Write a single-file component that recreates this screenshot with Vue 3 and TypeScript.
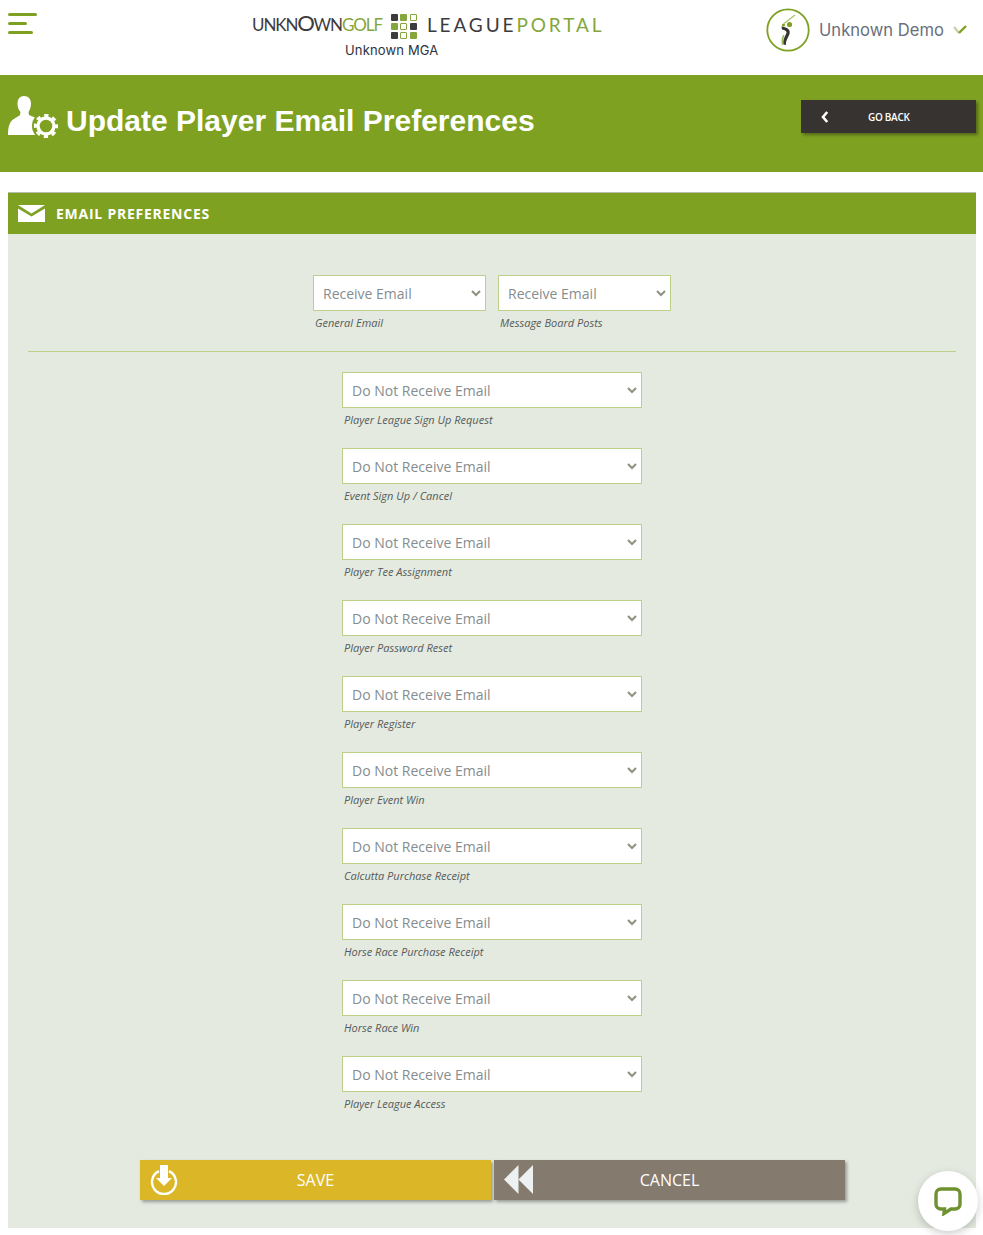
<template>
  <div class="page">
    <header class="top-bar">
      <button class="menu-btn" aria-label="Menu">
        <span class="bar bar-long"></span>
        <span class="bar bar-mid"></span>
        <span class="bar bar-short"></span>
      </button>
      <div class="brand">
        <div class="logo-row">
          <span class="logo-golf"><span class="dark">UNKN<span class="big-o">O</span>WN</span><span class="green">GOLF</span></span>
          <span class="logo-grid">
            <i v-for="(cell, i) in gridCells" :key="i" :class="cell"></i>
          </span>
          <span class="logo-portal"><span class="dark">LEAGUE</span><span class="green">PORTAL</span></span>
        </div>
        <div class="org-name">Unknown MGA</div>
      </div>
      <div class="user">
        <span class="avatar">
          <svg viewBox="0 0 44 44" width="44" height="44">
            <circle cx="22" cy="22" r="20.7" fill="#fff" stroke="#7fa122" stroke-width="1.8" />
            <path d="M18 15.5 L29 7" stroke="#a9c46a" stroke-width="1.4" fill="none" />
            <circle cx="23.5" cy="16.5" r="2.6" fill="#7fa122" />
            <circle cx="17.5" cy="17" r="1.6" fill="#7fa122" />
            <path d="M15.5 18.5 C20 19 25 21 23.5 26 C22 30 19.5 33 20 37 L17.5 36.5 C16.5 32 19 28.5 20.5 25 C21 23 18.5 22 16 21.5 Z" fill="#373330" />
            <path d="M17 27 C15.5 30 15 33 16 37 L17.5 37 C16.7 33 17.5 30 18.5 27 Z" fill="#9dbb5c" />
          </svg>
        </span>
        <span class="user-name">Unknown Demo</span>
        <svg class="user-check" viewBox="0 0 14 10" width="14" height="10">
          <path d="M1 2 L6 8" stroke="#c6d5a0" stroke-width="2.4" fill="none" />
          <path d="M6 8 L13 1" stroke="#7fa122" stroke-width="2.4" fill="none" />
        </svg>
      </div>
    </header>

    <section class="banner">
      <h1 class="banner-title">
        <svg class="banner-icon" viewBox="0 0 50 42" width="50" height="42">
          <path d="M16 0 C20.5 0 23 3 23 7.5 C23 11 22 14 20.5 16 L21 19 C25 20.5 28 22 30 24 L30 39 L0 39 C0 33 1 26 5 23.5 C7 22 10 20.5 12 19 L12.5 16 C10.5 14 9.5 11 9.5 7.5 C9.5 3 12 0 16 0 Z" fill="#fff" />
          <circle cx="38" cy="30" r="14" fill="#7fa122" />
          <circle cx="38" cy="30" r="8" fill="none" stroke="#fff" stroke-width="3.4" />
          <circle cx="38" cy="30" r="10.6" fill="none" stroke="#fff" stroke-width="3" stroke-dasharray="4.3 4.03" stroke-dashoffset="2.15" />
        </svg>
        <span>Update Player Email Preferences</span>
      </h1>
      <button class="back-btn">
        <svg viewBox="0 0 8 12" width="8" height="12">
          <path d="M6.2 1 L2 6 L6.2 11" stroke="#fff" stroke-width="2.6" fill="none" />
        </svg>
        <span>GO BACK</span>
      </button>
    </section>

    <section class="panel">
      <div class="panel-head">
        <svg viewBox="0 0 27 17" width="27" height="17">
          <path d="M0 0 H27 L13.5 8.5 Z" fill="#fff" />
          <path d="M0 3.5 L13.5 11.5 L27 3.5 V17 H0 Z" fill="#fff" />
        </svg>
        <span>EMAIL PREFERENCES</span>
      </div>
      <div class="panel-body">
        <div class="top-fields">
          <div v-for="f in topFields" :key="f" class="field field-small">
            <div class="select-wrap">
              <select>
                <option>Receive Email</option>
                <option>Do Not Receive Email</option>
              </select>
              <svg class="chevron" viewBox="0 0 10 7" width="10" height="7">
                <path d="M1 1 L5 5 L9 1" stroke="#8f9180" stroke-width="2" fill="none" />
              </svg>
            </div>
            <label>{{ f }}</label>
          </div>
        </div>
        <hr class="divider" />
        <div class="list-fields">
          <div v-for="f in listFields" :key="f" class="field field-wide">
            <div class="select-wrap">
              <select>
                <option>Do Not Receive Email</option>
                <option>Receive Email</option>
              </select>
              <svg class="chevron" viewBox="0 0 10 7" width="10" height="7">
                <path d="M1 1 L5 5 L9 1" stroke="#8f9180" stroke-width="2" fill="none" />
              </svg>
            </div>
            <label>{{ f }}</label>
          </div>
        </div>
        <div class="actions">
          <button class="action save">
            <svg viewBox="0 0 28 30" width="28" height="30">
              <path d="M9 6.1 A12 12 0 1 0 19 6.1" stroke="#fff" stroke-width="2.4" fill="none" />
              <path d="M10 0 H18 V13 H22 L14 21 L6 13 H10 Z" fill="#fff" />
            </svg>
            <span>SAVE</span>
          </button>
          <button class="action cancel">
            <svg viewBox="0 0 29 29" width="29" height="29">
              <path d="M14.5 0 V29 L0 14.5 Z" fill="#eef1f2" />
              <path d="M29 0 V29 L14.5 14.5 Z" fill="#eef1f2" />
            </svg>
            <span>CANCEL</span>
          </button>
        </div>
      </div>
    </section>

    <button class="chat" aria-label="Chat">
      <svg viewBox="0 0 30 30" width="30" height="30">
        <path d="M8 3 H22 C25 3 27 5 27 8 V18 C27 21 25 23 22 23 H18 L11 27.5 L11.5 23 H8 C5 23 3 21 3 18 V8 C3 5 5 3 8 3 Z" fill="none" stroke="#6f9130" stroke-width="3.4" />
      </svg>
    </button>
  </div>
</template>

<script setup lang="ts">
const gridCells: string[] = ['d', 'g', 'o', 'g', 'o', 'd', 'd', 'o', 'g']

const topFields: string[] = ['General Email', 'Message Board Posts']

const listFields: string[] = [
  'Player League Sign Up Request',
  'Event Sign Up / Cancel',
  'Player Tee Assignment',
  'Player Password Reset',
  'Player Register',
  'Player Event Win',
  'Calcutta Purchase Receipt',
  'Horse Race Purchase Receipt',
  'Horse Race Win',
  'Player League Access'
]
</script>

<style>
html,
body {
  margin: 0;
  background: #fff;
}
</style>

<style scoped>
.page {
  position: relative;
  height: 1235px;
  overflow: hidden;
  font-family: "Open Sans", "Liberation Sans", sans-serif;
  background: #fff;
}

.top-bar {
  height: 75px;
  display: flex;
  align-items: flex-start;
  box-sizing: border-box;
  padding: 13px 0 0 8px;
}

.menu-btn {
  display: flex;
  flex-direction: column;
  gap: 6px;
  width: 30px;
  padding: 0;
  border: 0;
  background: none;
}

.bar {
  height: 3px;
  border-radius: 2px;
  background: #7fa122;
}

.bar-long { width: 29px; }
.bar-mid { width: 19px; }
.bar-short { width: 25px; }

.brand {
  width: 352px;
  margin-left: 214px;
  display: flex;
  flex-direction: column;
  align-items: flex-start;
}

.logo-row {
  display: flex;
  align-items: center;
  height: 26px;
}

.logo-golf {
  font-family: "Lato", sans-serif;
  font-size: 17px;
  line-height: 22px;
  letter-spacing: -1.1px;
  white-space: nowrap;
  margin-bottom: 2px;
}

.big-o {
  font-size: 22px;
  font-weight: 400;
  line-height: 0;
  letter-spacing: -1.4px;
}

.logo-portal {
  font-family: "Lato", sans-serif;
  font-size: 19px;
  line-height: 22px;
  letter-spacing: 2.9px;
  white-space: nowrap;
  margin: 0 0 2px 10px;
}

.dark { color: #3c3b3d; }
.green { color: #84a63a; }

.logo-grid {
  display: grid;
  grid-template-columns: repeat(3, 7px);
  grid-auto-rows: 7px;
  column-gap: 2.5px;
  row-gap: 2px;
  margin-left: 9px;
}

.logo-grid i {
  display: block;
  box-sizing: border-box;
  border-radius: 1px;
}

.logo-grid .d { background: #3c3b3d; }
.logo-grid .g { background: #84a63a; }
.logo-grid .o { border: 1px solid #84a63a; }

.org-name {
  margin: 2px 0 0 93px;
  font-family: "Inter", sans-serif;
  font-size: 13px;
  letter-spacing: 0.15px;
  line-height: 18px;
  color: #2d3340;
}

.user {
  margin-left: 162px;
  margin-top: -5px;
  display: flex;
  align-items: center;
}

.avatar {
  display: block;
  height: 44px;
}

.user-name {
  margin-left: 9px;
  font-family: "Inter", sans-serif;
  font-size: 16.6px;
  color: #6a6f7c;
  white-space: nowrap;
}

.user-check {
  margin-left: 9px;
}

.banner {
  height: 97px;
  background: #7fa122;
  display: flex;
  justify-content: space-between;
  align-items: flex-start;
  padding: 0 7px 0 8px;
}

.banner-title {
  display: flex;
  align-items: flex-start;
  margin: 20px 0 0;
  font-family: "Liberation Sans", Arial, sans-serif;
  font-size: 30px;
  line-height: 52px;
  font-weight: 700;
  color: #fff;
}

.banner-icon {
  margin-right: 8px;
  margin-top: 1px;
}

.back-btn {
  width: 175px;
  height: 33px;
  margin-top: 25px;
  border: 0;
  background: #373330;
  box-shadow: 2px 2px 3px rgba(0, 0, 0, 0.35);
  display: flex;
  align-items: center;
  padding: 0 0 0 20px;
  color: #fff;
  font-family: "Open Sans", sans-serif;
  font-size: 10px;
  font-weight: 600;
  letter-spacing: -0.3px;
}

.back-btn span {
  margin-left: 39px;
}

.panel {
  margin: 20px 7px 0 8px;
  height: 1036px;
  background: #e4eadf;
}

.panel-head {
  height: 42px;
  box-sizing: border-box;
  border-top: 1px solid #b9bfae;
  background: #7fa122;
  display: flex;
  align-items: center;
  padding-left: 10px;
  gap: 11px;
  color: #fff;
  font-size: 14px;
  font-weight: 700;
  letter-spacing: 0.75px;
}

.panel-body {
  padding: 41px 20px 0;
}

.top-fields {
  display: flex;
  justify-content: center;
  gap: 12px;
}

.field label {
  display: block;
  margin: 5px 0 0 2px;
  font-size: 11px;
  line-height: 14px;
  font-style: italic;
  color: #555a5c;
}

.field-small { width: 173px; }
.field-wide { width: 300px; }

.select-wrap {
  position: relative;
}

select {
  display: block;
  width: 100%;
  height: 36px;
  box-sizing: border-box;
  appearance: none;
  border: 1px solid #bdd08a;
  border-radius: 0;
  background: #fff;
  padding: 0 9px;
  font-family: "Open Sans", sans-serif;
  font-size: 14px;
  color: #858d8f;
}

.chevron {
  position: absolute;
  right: 5px;
  top: 15px;
  pointer-events: none;
}

.divider {
  margin: 21px 0 20px;
  border: 0;
  border-top: 1px solid #bdd08a;
}

.list-fields {
  display: flex;
  flex-direction: column;
  align-items: center;
  gap: 21px;
}

.actions {
  display: flex;
  gap: 3px;
  margin: 49px 0 0 112px;
}

.action {
  position: relative;
  width: 351px;
  height: 40px;
  border: 0;
  color: #fff;
  font-family: "Open Sans", sans-serif;
  font-size: 16px;
  display: flex;
  align-items: center;
  justify-content: center;
  box-shadow: 2px 2px 3px rgba(60, 60, 60, 0.45);
}

.action svg {
  position: absolute;
  left: 10px;
  top: 5px;
}

.save { background: #dbb728; }
.cancel { background: #857a6e; }

.chat {
  position: absolute;
  left: 918px;
  top: 1171px;
  width: 60px;
  height: 60px;
  border: 0;
  border-radius: 50%;
  background: #fff;
  padding: 0;
  display: flex;
  align-items: center;
  justify-content: center;
  box-shadow: 0 3px 8px rgba(0, 0, 0, 0.2);
}
</style>
